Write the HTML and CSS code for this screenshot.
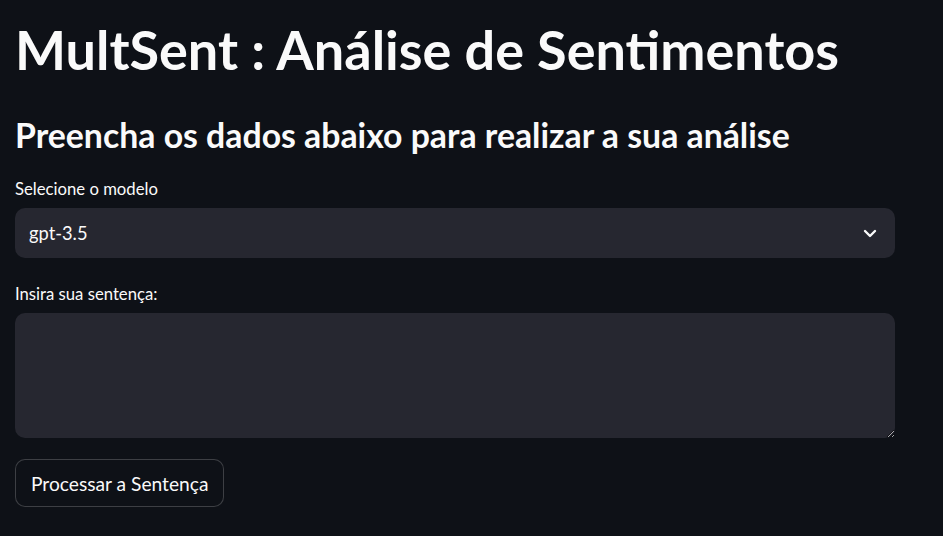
FILE: index.html
```html
<!DOCTYPE html>
<html lang="pt">
<head>
<meta charset="utf-8">
<title>MultSent</title>
<link rel="stylesheet" href="styles.css">
</head>
<body>
<main class="main">
  <h1 class="title">MultSent : Análise de Sentimentos</h1>
  <h3 class="subtitle">Preencha os dados abaixo para realizar a sua análise</h3>
  <div class="field">
    <label class="label">Selecione o modelo</label>
    <div class="select">
      <span class="select-value">gpt-3.5</span>
      <svg class="chevron" width="16" height="16" viewBox="0 0 16 16"><path d="M3 6l5 5 5-5" fill="none" stroke="#fafafa" stroke-width="2.4" stroke-linecap="round" stroke-linejoin="round"/></svg>
    </div>
  </div>
  <div class="field field-text">
    <label class="label">Insira sua sentença:</label>
    <textarea class="textarea"></textarea>
  </div>
  <button class="button">Processar a Sentença</button>
</main>
</body>
</html>
```
FILE: styles.css
```css
html, body {
  margin: 0;
  background: #0e1117;
  color: #fafafa;
  font-family: Lato, "Noto Sans", sans-serif;
}
.main {
  width: 880px;
  padding: 16px 0 0 15px;
  display: flex;
  flex-direction: column;
  align-items: flex-start;
}
.title {
  margin: 0;
  font-size: 54px;
  font-weight: 700;
  line-height: 68px;
}
.subtitle {
  margin: 31px 0 0;
  font-size: 33.8px;
  font-weight: 700;
  line-height: 40px;
}
.field {
  width: 880px;
  margin-top: 23px;
  display: flex;
  flex-direction: column;
}
.field-text {
  margin-top: 25px;
}
.label {
  font-size: 16.7px;
  line-height: 22px;
  margin-bottom: 8px;
}
.select {
  height: 50px;
  background: #262730;
  border-radius: 10px;
  display: flex;
  align-items: center;
  justify-content: space-between;
  padding: 0 17px 0 14px;
}
.select-value {
  font-size: 18.3px;
}
.chevron {
  display: block;
}
.textarea {
  height: 125px;
  box-sizing: border-box;
  background: #262730;
  border: none;
  border-radius: 10px;
  resize: vertical;
  color: #fafafa;
  outline: none;
  margin: 0;
}
.button {
  margin-top: 21px;
  height: 48px;
  padding: 0 15px;
  background: #0e1117;
  border: 1px solid rgba(250, 250, 250, 0.2);
  border-radius: 10px;
  color: #fafafa;
  font-family: inherit;
  font-size: 19.2px;
}
```
